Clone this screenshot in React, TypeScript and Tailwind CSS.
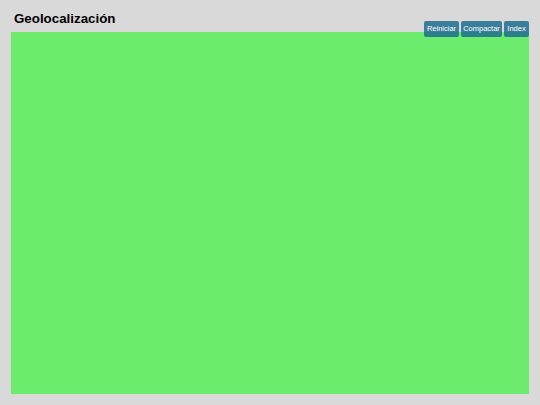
import React from "react";

export default function App() {
  const btn =
    "h-[16px] flex items-center justify-center rounded-[2px] bg-[#1f6d8f]/85 text-white text-[7.5px] leading-none";
  return (
    <div
      className="relative w-[540px] h-[405px] bg-[#d9d9d9] flex flex-col"
      style={{ fontFamily: '"Liberation Sans", Arial, sans-serif' }}
    >
      <div className="h-[32px] pl-[14px] pt-[11px]">
        <h1 className="text-[13.33px] font-bold text-black leading-[15px] m-0">Geolocalización</h1>
      </div>
      <div className="mx-[11px] mb-[11px] flex-1 bg-[#6deb6d]" />
      <div className="absolute top-[21px] right-[11px] flex gap-[2px]">
        <div className={`${btn} w-[35px]`}>Reiniciar</div>
        <div className={`${btn} w-[41px]`}>Compactar</div>
        <div className={`${btn} w-[25px]`}>Index</div>
      </div>
    </div>
  );
}
